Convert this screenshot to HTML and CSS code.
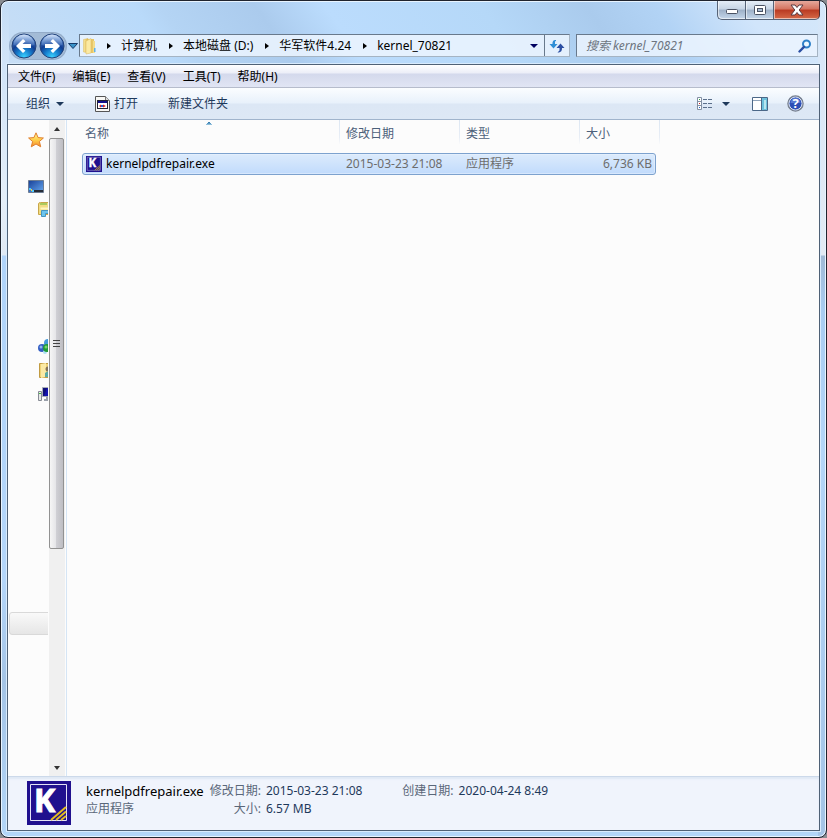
FILE: index.html
```html
<!DOCTYPE html>
<html lang="zh-CN">
<head>
<meta charset="utf-8">
<title>kernel_70821</title>
<link rel="stylesheet" href="styles.css">
</head>
<body>
<main class="window">
  <div class="caption">
    <button class="cap" aria-label="最小化"><svg width="14" height="10" viewBox="0 0 14 10"><rect x="1.5" y="4.500" width="11" height="4" rx="1" fill="#fff" stroke="#4a5263"/></svg></button>
    <button class="cap" aria-label="最大化"><svg width="14" height="12" viewBox="0 0 14 12"><rect x="1.500" y="1.500" width="11" height="9" rx="1" fill="#fff" stroke="#4a5263"/><rect x="4.500" y="4.500" width="5" height="3" fill="#a9bcd3" stroke="#4a5263"/></svg></button>
    <button class="cap close" aria-label="关闭"><svg width="14" height="12" viewBox="0 0 14 12"><path d="M1 1h4l2 2.500L9 1h4L9.200 6l3.800 5H9L7 8.500 5 11H1l3.800-5z" fill="#fff" stroke="#5a3a40"/></svg></button>
  </div>

  <div class="navrow">
    <div class="travel">
      <button class="orb" aria-label="后退"><svg width="26" height="26" viewBox="0 0 26 26"><defs><radialGradient id="orb" cx=".5" cy=".95" r=".85"><stop offset="0" stop-color="#3bd2ff"/><stop offset=".35" stop-color="#1680cf"/><stop offset=".65" stop-color="#123e92"/><stop offset="1" stop-color="#4f7ec4"/></radialGradient><linearGradient id="gloss" x2="0" y2="1"><stop offset="0" stop-color="#e4efff" stop-opacity=".9"/><stop offset="1" stop-color="#6d9bdc" stop-opacity=".25"/></linearGradient></defs><circle cx="13" cy="13" r="12" fill="url(#orb)" stroke="#24437a"/><path d="M2.500 12a10.500 10.500 0 0 1 21 0q-10.500 3-21 0z" fill="url(#gloss)"/><path d="M5 13l7-7 2.500 2.200L11.500 11H20v4h-8.500l3 2.800L12 20z" fill="#fff"/></svg></button>
      <button class="orb" aria-label="前进"><svg width="26" height="26" viewBox="0 0 26 26"><circle cx="13" cy="13" r="12" fill="url(#orb)" stroke="#24437a"/><path d="M2.500 12a10.500 10.500 0 0 1 21 0q-10.500 3-21 0z" fill="url(#gloss)"/><path d="M21 13l-7-7-2.500 2.200 3 2.800H6v4h8.500l-3 2.800L14 20z" fill="#fff"/></svg></button>
    </div>
    <button class="recent" aria-label="最近的页面"><svg width="10" height="8" viewBox="0 0 10 8"><path d="M.5 1.500h9L5 6.500z" fill="#3a93c9" stroke="#173a68"/></svg></button>
    <div class="address">
      <svg class="folder" width="16" height="18" viewBox="0 0 16 18"><defs><linearGradient id="fold"><stop offset="0" stop-color="#f9e9a0"/><stop offset="1" stop-color="#e0b84f"/></linearGradient></defs><path d="M1.500 2.500L6 1.500v14l-4.500-.5z" fill="url(#fold)" stroke="#d9b75c" stroke-width=".5"/><path d="M6 2h6v14H6z" fill="#e9c868"/><path d="M4 4l5-2.500V16l-5 1z" fill="#fbeaa4" stroke="#d9b75c" stroke-width=".5"/><path d="M11 4h2v12h-2z" fill="#f3dc8c"/><path d="M12 11h1.500v4H12z" fill="#63b1e5"/></svg>
      <i class="arr"></i><a href="#">计算机</a>
      <i class="arr"></i><a href="#">本地磁盘 (D:)</a>
      <i class="arr"></i><a href="#">华军软件4.24</a>
      <i class="arr"></i><a href="#">kernel_70821</a>
      <button class="drop" aria-label="以前的位置"><i class="tri navy"></i></button>
      <button class="refresh" aria-label="刷新"><svg width="16" height="14" viewBox="0 0 16 14"><path d="M7 1C4 1 3.500 2.500 3.500 5H.5L4.500 9.500 8.500 5H6V2.500L7 2z" fill="#2f8fd6"/><path d="M8.500 13.500c3.500 0 4.500-1.500 4.500-4.500h2.500L11.500 4.500 7.500 9h3v2.500z" fill="#2b4fa3"/></svg></button>
    </div>
    <label class="search">
      <input type="search" aria-label="搜索" placeholder="搜索 kernel_70821">
      <svg width="14" height="14" viewBox="0 0 14 14"><circle cx="8.500" cy="5" r="3.500" fill="#eef8ff" stroke="#2e80c8" stroke-width="2"/><path d="M6 7.800L1.500 12.500" stroke="#2b4fa3" stroke-width="2.400" stroke-linecap="round"/></svg>
    </label>
  </div>

  <section class="client">
    <nav class="menu">
      <button>文件(F)</button><button>编辑(E)</button><button>查看(V)</button><button>工具(T)</button><button>帮助(H)</button>
    </nav>
    <div class="tools">
      <button class="organize">组织<i class="tri"></i></button>
      <button class="open"><svg width="15" height="16" viewBox="0 0 15 16"><path d="M.5.5h10l4 4v11H.5z" fill="#f8f8f5" stroke="#555"/><path d="M10.500.5v4h4" fill="#ddd" stroke="#777"/><rect x="2.500" y="4.500" width="10" height="8" fill="#fff" stroke="#223"/><rect x="3" y="5" width="9" height="2" fill="#10108c"/><path d="M4 10l2-1.500v3zM8 8.500l3 1.500-3 1.500z" fill="#d42020"/><path d="M6 9h2v2H6z" fill="#2560e0"/></svg>打开</button>
      <button class="create">新建文件夹</button>
      <button class="view" aria-label="更改视图"><svg width="16" height="14" viewBox="0 0 16 14"><g fill="#fff" stroke="#8390a3"><path d="M.5.500h4v12h-4z"/><path d="M.5 4.500h4M.5 8.500h4"/></g><g stroke="#5b6f8b"><path d="M6 2.500h4m1 0h4M6 6.500h4m1 0h4M6 10.500h4m1 0h4"/></g><path d="M2 2h1v1H2z" fill="#2e9a45"/><path d="M2 6h1v1H2z" fill="#c22"/><path d="M2 10h1v1H2z" fill="#1b63c8"/></svg><i class="tri"></i></button>
      <button class="preview" aria-label="预览窗格"><svg width="16" height="14" viewBox="0 0 16 14"><path d="M.5.500h15v13H.5z" fill="#fff" stroke="#4b6787"/><path d="M1 3.500h9" stroke="#8fa3ba"/><path d="M10 1h5v12h-5z" fill="#6dc0dc"/><path d="M12 3h2v9h-2z" fill="#b8e6f0"/><path d="M9.500 1v12" stroke="#4b6787"/></svg></button>
      <button class="help" aria-label="帮助"><svg width="17" height="17" viewBox="0 0 17 17"><circle cx="8.500" cy="8.500" r="7.500" fill="#2c4fb5" stroke="#77808e" stroke-width="1.500"/><circle cx="8.500" cy="8.500" r="6.500" fill="none" stroke="#d9e2f4"/><path d="M3.500 8a5 5 0 0 1 10 0z" fill="#5679d2"/><text x="8.500" y="13" text-anchor="middle" class="qmark">?</text></svg></button>
    </div>

    <div class="body">
      <aside class="tree">
        <a href="#" class="star" aria-label="收藏夹"><svg width="16" height="16" viewBox="0 0 16 16"><defs><linearGradient id="st" x2="0" y2="1"><stop offset="0" stop-color="#fff6a0"/><stop offset=".5" stop-color="#ffd04a"/><stop offset="1" stop-color="#f58a2e"/></linearGradient></defs><path d="M8 .8l2.100 4.800 5.300.4-4 3.500 1.300 5.300L8 12l-4.700 2.800 1.300-5.300L.6 6l5.300-.4z" fill="url(#st)" stroke="#e07f2c"/></svg></a>
        <a href="#" class="desk" aria-label="桌面"><svg width="16" height="13" viewBox="0 0 16 13"><defs><linearGradient id="dk" x2="1" y2="1"><stop offset="0" stop-color="#173f98"/><stop offset="1" stop-color="#67aaf0"/></linearGradient></defs><path d="M.5.500h15v12H.5z" fill="url(#dk)" stroke="#6e7d92"/><path d="M5 10h10v2H5z" fill="#262d38"/><path d="M1 8h2v2H1zM4 10h2v2H4z" fill="#50c8ff"/><path d="M3 9h1v2H3z" fill="#ffcf38"/></svg></a>
        <a href="#" class="lib" aria-label="库"><svg width="16" height="16" viewBox="0 0 16 16"><path d="M.5 2q0-1.500 2-1.500h11v12H.5z" fill="#f1dc83" stroke="#c8a64a"/><path d="M2 1.500h7v1H2z" fill="#65b836"/><path d="M2.500 5.500h12v2h-12z" fill="#fff6c0"/><path d="M3.500 14.500v-6h11v3h-7v3z" fill="#6dc5ee" stroke="#4695c0"/></svg></a>
        <a href="#" class="group" aria-label="家庭组"><svg width="16" height="16" viewBox="0 0 16 16"><circle cx="10" cy="4" r="4" fill="#469cda"/><circle cx="4" cy="9" r="4" fill="#345fc4"/><circle cx="3" cy="8" r="1.500" fill="#8fb4ee"/><circle cx="7" cy="13" r="2" fill="#aee1f5"/><circle cx="9" cy="9" r="4" fill="#219b3a"/><circle cx="8" cy="8" r="1.500" fill="#79d56c"/></svg></a>
        <a href="#" class="user" aria-label="用户"><svg width="16" height="17" viewBox="0 0 16 17"><path d="M1.500 1.500h10v14h-10z" fill="#eed276" stroke="#c19b42"/><path d="M3 2l5-1v14l-5 1z" fill="#fbe9a4"/><circle cx="10" cy="7" r="2.500" fill="#84745a"/><path d="M7 15v-4q3-3 6 0v4z" fill="#5caaa5"/></svg></a>
        <a href="#" class="pc" aria-label="网络"><svg width="16" height="16" viewBox="0 0 16 16"><path d="M4.500 1.500h11v9h-11z" fill="#1414ae" stroke="#a8adb6"/><path d="M5 2h4L6 10H5z" fill="#101078"/><path d="M8 11h4v2h2v2H6v-2h2z" fill="#9ba1ab"/><path d="M.5 5.500h3v9h-3z" fill="#e8e8e8" stroke="#868b94"/><path d="M1 7h2v1H1z" fill="#40c040"/></svg></a>
        <div class="hover"></div>
      </aside>
      <div class="scroll">
        <i class="up"></i>
        <div class="track"><div class="thumb"><span></span><span></span><span></span></div></div>
        <i class="down"></i>
      </div>
      <div class="files">
        <table>
          <thead><tr><th class="sorted">名称</th><th>修改日期</th><th>类型</th><th>大小</th></tr></thead>
          <tbody><tr><td class="name"><svg width="16" height="16" viewBox="0 0 44 44"><use href="#app"/></svg>kernelpdfrepair.exe</td><td>2015-03-23 21:08</td><td>应用程序</td><td class="size">6,736 KB</td></tr></tbody>
        </table>
      </div>
    </div>

    <footer class="details">
      <svg width="44" height="44" viewBox="0 0 44 44"><g id="app"><path d="M0 0h44v44H0z" fill="#20108e"/><path d="M3.500 3.500h36v36h-36z" fill="none" stroke="#e4e2f5"/><path d="M24 39L39 26M29 39l10-8.500M34 39l5-4" stroke="#e3bc20" stroke-width="2"/><text x="7" y="31" class="klogo">K</text></g></svg>
      <div class="about"><b>kernelpdfrepair.exe</b><span>应用程序</span></div>
      <dl class="first"><dt>修改日期:</dt><dd>2015-03-23 21:08</dd><dt>大小:</dt><dd>6.57 MB</dd></dl>
      <dl><dt>创建日期:</dt><dd>2020-04-24 8:49</dd></dl>
    </footer>
  </section>
</main>
</body>
</html>
```
FILE: styles.css
```css
* { box-sizing: border-box; }
body {
  margin: 0;
  background: #8a8d92;
  font: 12px/16px "Noto Sans", "Noto Sans CJK SC", sans-serif;
  color: #000;
}
button {
  margin: 0; padding: 0; border: 0; background: none;
  font: inherit; color: inherit;
  display: flex; align-items: center;
}
a { color: inherit; text-decoration: none; }
svg { display: block; flex: none; }

.window {
  min-height: 100vh;
  display: flex; flex-direction: column;
  padding: 0 6px 6px;
  border: 1px solid #20242e;
  border-radius: 8px;
  box-shadow: inset 0 0 0 1px #e8f4ff;
  background:
    linear-gradient(#d9e7f700 0, #d9e7f7 64px, #e2ebf4 254px, #a0bad6 255px, #a9cdf2 310px, #b4d6f8 450px, #a4c4e6 100%) right / 8px 100% no-repeat,
    linear-gradient(#d1e4f800 0, #d1e4f8 64px, #e4eef8 200px, #e0e9f3 254px, #b0d4fa 255px, #b4d6fa 580px, #a4c4e6 680px, #b2d5f8 100%) left / 8px 100% no-repeat,
    linear-gradient(55deg, #c8def5 0, #b9dafa 20%, #b4d4f4 23%, #abcbed 34%, #bbdcfd 42%, #b5d8f8 60%, #aacbed 72%, #b2d3f5 80%, #d1e5fb 90%, #d4e7fa 100%) top / 100% 64px no-repeat,
    #b2d5f8;
}

.caption { display: flex; justify-content: flex-end; height: 33px; align-items: flex-start; }
.cap {
  width: 28px; height: 19px; justify-content: center;
  border: 1px solid #566377; border-top: 0; border-right: 0;
  background: linear-gradient(#e4edf7, #c6d4e4 45%, #9eb1c8 50%, #c4d6ea);
  box-shadow: inset 1px -1px 0 #ffffff90;
}
.cap:first-child { border-radius: 0 0 0 5px; }
.close {
  width: 47px; border-right: 1px solid #4f2c33; border-radius: 0 0 5px 0;
  background: linear-gradient(#e5a89c, #d4735f 45%, #b93a22 50%, #d66a48);
}

.navrow { display: flex; height: 23px; align-items: center; padding: 0 2px 0 3px; margin-bottom: 7px; }
.travel {
  display: flex; gap: 2px; padding: 0 1px; border-radius: 14px;
  background: #a3bbd6; box-shadow: 0 0 0 1px #93abc8;
}
.recent { width: 13px; justify-content: center; }
.address, .search {
  display: flex; align-items: center; height: 23px;
  border: 1px solid #68798c; border-right-color: #a5b4c3; border-bottom-color: #a5b4c3;
  background: #eaf4fee0;
}
.address { flex: 1; min-width: 0; padding-left: 2px; white-space: nowrap; }
.arr { margin: 0 10px 0 12px; border: 3px solid transparent; border-left: 4px solid #000; border-right: 0; }
.folder + .arr { margin-left: 9px; }
.tri { border: 4px solid transparent; border-top: 4px solid #1e395b; border-bottom: 0; }
.navy { border-top-color: #000060; }
.drop { margin-left: auto; width: 20px; height: 21px; justify-content: center; }
.refresh { width: 25px; height: 21px; justify-content: center; border-left: 1px solid #68798c; }
.search { flex: 0 1 242px; min-width: 0; margin-left: 6px; padding: 0 5px 0 9px; }
.search input {
  flex: 1; min-width: 0; padding: 0; border: 0; outline: 0; background: none;
  font: inherit; font-style: italic;
}
.search input::placeholder { color: #6d7580; opacity: 1; }

.client {
  flex: 1; display: flex; flex-direction: column;
  border: 1px solid #4f6176; box-shadow: 0 0 0 1px #d8ebfd;
  background: #fcfcfc;
}
.menu {
  display: flex; gap: 17px; height: 23px; padding: 2px 0 0 10px;
  background: linear-gradient(#fff 0, #eceef8 8px, #d4d9ec 9px, #e1e5f4 22px);
  border-bottom: 1px solid #b6bccc;
}
.tools {
  display: flex; align-items: center; height: 32px; padding: 0 15px 0 18px;
  color: #1e395b;
  background: linear-gradient(#fbfdff 0, #e8f1fb 15px, #dce7f5 16px, #dde8f5 30px);
  border-bottom: 1px solid #a0b4cc;
}
.organize { gap: 6px; }
.open { gap: 4px; margin-left: 31px; }
.create { margin-left: 30px; }
.view { margin-left: auto; gap: 9px; }
.preview { margin-left: 22px; }
.help { margin-left: 19px; }
.qmark { font: bold 13px "Noto Sans", sans-serif; fill: #fff; }

.body { flex: 1; display: flex; }
.tree { width: 40px; margin-right: 1px; overflow: hidden; display: flex; flex-direction: column; padding: 12px 0 0 1px; }
.tree a { flex: none; margin-left: 29px; }
.tree .star, .tree .desk { margin-left: 19px; }
.desk { margin-top: 32px; }
.lib { margin-top: 9px; }
.group { margin-top: 121px; }
.user { margin-top: 7px; }
.pc { margin-top: 7px; }
.hover {
  margin-top: 210px; height: 23px; width: 60px; flex: none;
  border: 1px solid #d9d9d9; border-radius: 3px;
  background: linear-gradient(#f9f9f9, #e6e6e6);
}
.scroll { width: 16px; padding-right: 1px; display: flex; flex-direction: column; align-items: center; background: #f0f0f0; }
.track { flex: 1; align-self: stretch; }
.up { margin: 7px 0; border: 3px solid transparent; border-bottom: 4px solid #333; border-top: 0; }
.down { margin: 6px 0; border: 3px solid transparent; border-top: 4px solid #333; border-bottom: 0; }
.thumb {
  height: 66%; display: flex; flex-direction: column; align-items: center; justify-content: center; gap: 2px;
  border: 1px solid #929292; border-radius: 2px;
  background: linear-gradient(90deg, #f6f6f6, #e5e5e8 45%, #cfcfd4 50%, #bebec3);
}
.thumb span { width: 7px; height: 1px; background: #444; }
.files { flex: 1; min-width: 0; margin-left: 1px; padding-left: 12px; border-left: 1px solid #d5e5f5; }

table { display: block; width: 581px; }
thead, tbody { display: block; }
tr { display: grid; grid-template-columns: 261px 120px 120px 80px; align-items: center; }
th {
  height: 24px; padding: 6px 6px 0; font-weight: normal; text-align: left; color: #4c607a;
  border-right: 1px solid; border-image: linear-gradient(#dce6f2, #e8eef6 70%, #fcfcfc) 1;
  border-width: 0 1px 0 0;
}
.sorted {
  background: linear-gradient(#3c7fb1, #3c7fb1) 129px 2px / 2px 1px no-repeat,
    linear-gradient(#5b9ac4, #5b9ac4) 128px 3px / 4px 1px no-repeat,
    linear-gradient(#8fbfdc, #8fbfdc) 127px 4px / 6px 1px no-repeat;
}
tbody tr {
  grid-template-columns: 257px 120px 120px 1fr;
  height: 22px; margin: 9px 4px 0 3px;
  border: 1px solid #7da2ce; border-radius: 3px;
  background: linear-gradient(#dcebfc, #c1dbfc);
  box-shadow: inset 0 0 0 1px #ebf4fd80;
}
td { padding: 0 6px; color: #6d6d6d; }
.name { display: flex; align-items: center; gap: 4px; padding: 0 3px; color: #000; }
.size { padding: 0 3px; text-align: right; }

.details {
  display: flex; align-items: flex-start; height: 54px; padding: 4px 19px;
  line-height: 18px; color: #1e395b;
  background: #f0f4fc; border-top: 1px solid #ccd9ea; box-shadow: inset 0 2px 2px #dfe8f5;
}
.about { display: flex; flex-direction: column; margin-left: 15px; color: #5a6779; }
.about b { color: #000; font-weight: normal; font-size: 13px; }
.about, dl { padding-top: 1px; }
dl { display: grid; grid-template-columns: auto auto; column-gap: 5px; margin: 0 0 0 40px; }
.first { margin-left: 6px; }
dt { text-align: right; color: #5a6779; }
dd { margin: 0; }
.klogo { font: bold 32px/1 "Noto Sans", sans-serif; fill: #fff; stroke: #fff; stroke-width: 1; }
```
